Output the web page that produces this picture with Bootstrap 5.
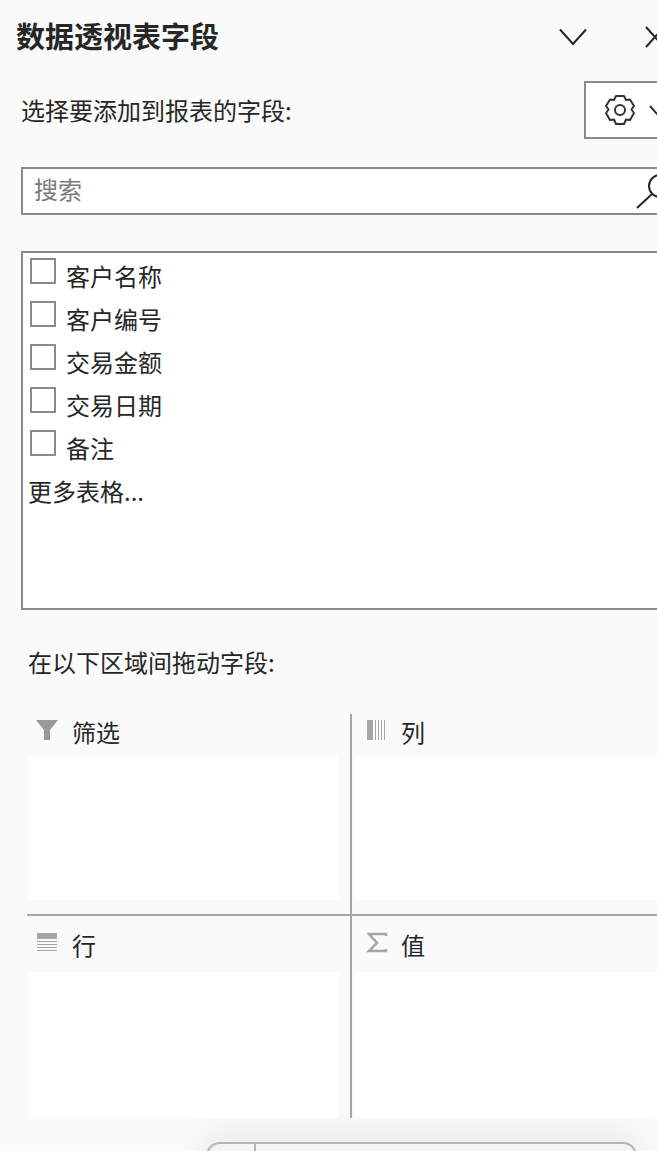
<!DOCTYPE html>
<html lang="zh-CN">
<head>
    <meta charset="UTF-8">
    <meta name="viewport" content="width=device-width, initial-scale=1.0">
    <title>数据透视表字段</title>
    <link href="https://cdn.jsdelivr.net/npm/bootstrap@5.3.0/dist/css/bootstrap.min.css" rel="stylesheet">
    <style>
        html, body { height: 1151px; overflow: hidden; }
        body {
            background: #fafafa;
            color: #262626;
            font-family: "Noto Sans CJK SC", "Liberation Sans", sans-serif;
            font-size: 24px;
            line-height: 34px;
        }
        .pane { width: 690px; position: relative; height: 1151px; }
        .pane-head { height: 74px; padding: 0 25px 0 16px; }
        .pane-title { font-size: 29px; font-weight: 700; line-height: 70px; margin: 0 0 4px; color: #262626; }
        .head-btns { gap: 58px; }
        .field-row { height: 58px; margin-top: 7px; padding-left: 21px; }
        .gear-btn { width: 106px; height: 58px; background: #fff; border: 2px solid #8a8a8a; padding-left: 17px; gap: 12px; }
        .search-wrap { height: 48px; margin: 28px 0 0 21px; background: #fff; border: 2px solid #8a8a8a; padding: 0 0 4px 11px; color: #7a7a7a; }
        .search-wrap svg { margin-right: 13px; margin-top: 4px; }
        .field-box { height: 359px; margin: 36px 0 0 21px; background: #fff; border: 2px solid #8a8a8a; padding: 5px 0 0 7px; }
        .field-item { height: 43px; gap: 10px; }
        .tick { width: 26px; height: 26px; border: 2px solid #8a8a8a; background: #fff; flex: none; }
        .field-label { line-height: 34px; margin-top: 1px; }
        .more-link { line-height: 34px; margin-top: 1px; margin-left: -2px; }
        .drag-hint { margin: 35px 0 0 28px; height: 34px; }
        .zones { margin: 35px 0 0 27px; width: 663px; display: grid; grid-template-columns: 323px 1fr; grid-template-rows: 202px 202px; position: relative; z-index: 1; }
        .zone { display: flex; flex-direction: column; }
        .zone-right { border-left: 2px solid #a6a6a6; }
        .zone-top { border-bottom: 2px solid #a6a6a6; }
        .zone-head { height: 43px; padding-bottom: 8px; gap: 14px; }
        .zone-left .zone-head { padding-left: 9px; }
        .zone-right .zone-head { padding-left: 14px; gap: 13px; }
        .zone-bottom .zone-head { height: 56px; padding: 2px 0 0 0; }
        .zone-bottom.zone-left .zone-head { padding-left: 9px; gap: 14px; }
        .zone-bottom.zone-right .zone-head { padding-left: 14px; }
        .drop-box { background: #fff; flex: 1; margin-right: 12px; margin-left: 1px; }
        .zone-top .drop-box { margin-bottom: 14px; }
        .zone-right .drop-box { margin-right: 0; margin-left: 3px; }
        .zone-icon { width: 22px; height: 24px; flex: none; margin-top: -4px; }
        .foot-bar { position: absolute; left: 206px; top: 1142px; width: 431px; height: 30px; border: 2px solid #b4b4b4; border-radius: 14px; background: #f4f4f4; box-shadow: 0 0 40px rgba(0,0,0,.12); }
        .foot-bar span { display: block; width: 48px; height: 30px; border-right: 2px solid #b4b4b4; }
    </style>
</head>
<body>
    <div class="pane">
        <div class="pane-head d-flex justify-content-between align-items-center">
            <h1 class="pane-title">数据透视表字段</h1>
            <div class="head-btns d-flex align-items-center">
                <svg width="28" height="18" viewBox="0 0 28 18" fill="none" stroke="#262626" stroke-width="2"><path d="M1 1.500 14 16 27 1.500"/></svg>
                <svg width="20" height="22" viewBox="0 0 20 22" fill="none" stroke="#262626" stroke-width="2"><path d="M1 1 19 21M19 1 1 21"/></svg>
            </div>
        </div>

        <div class="field-row d-flex justify-content-between align-items-center">
            <span>选择要添加到报表的字段:</span>
            <div class="gear-btn d-flex align-items-center">
                <svg width="34" height="32" viewBox="0 0 34 32" fill="none" stroke="#333" stroke-width="2" stroke-linejoin="round"><path d="M13 2h8l2 4 4-.500 4 6.500-2.500 3.500L31 19l-4 7-4-.500L21 30h-8l-2-4.500-4 .500-4-7 2.500-3.500L3 12l4-6.500 4 .500z"/><circle cx="17" cy="16" r="5"/></svg>
                <svg width="16" height="10" viewBox="0 0 16 10" fill="none" stroke="#333" stroke-width="2"><path d="M1 1l7 8 7-8"/></svg>
            </div>
        </div>

        <div class="search-wrap d-flex justify-content-between align-items-center">
            <span>搜索</span>
            <svg width="40" height="36" viewBox="0 0 40 36" fill="none" stroke="#262626" stroke-width="2"><circle cx="25" cy="13" r="11"/><path d="M17 21 2 35"/></svg>
        </div>

        <div class="field-box">
            <div class="field-item d-flex align-items-start"><div class="tick"></div><span class="field-label">客户名称</span></div>
            <div class="field-item d-flex align-items-start"><div class="tick"></div><span class="field-label">客户编号</span></div>
            <div class="field-item d-flex align-items-start"><div class="tick"></div><span class="field-label">交易金额</span></div>
            <div class="field-item d-flex align-items-start"><div class="tick"></div><span class="field-label">交易日期</span></div>
            <div class="field-item d-flex align-items-start"><div class="tick"></div><span class="field-label">备注</span></div>
            <div class="more-link">更多表格...</div>
        </div>

        <div class="drag-hint">在以下区域间拖动字段:</div>

        <div class="zones">
            <div class="zone zone-left zone-top">
                <div class="zone-head d-flex align-items-center">
                    <svg class="zone-icon" viewBox="0 0 22 24" fill="#999"><path d="M0 2h22L14 12v10H8V12z"/></svg>
                    <span>筛选</span>
                </div>
                <div class="drop-box"></div>
            </div>
            <div class="zone zone-right zone-top">
                <div class="zone-head d-flex align-items-center">
                    <svg class="zone-icon" viewBox="0 0 22 24" fill="#a6a6a6"><path d="M1 2h6v20H1zM9 2h1v20H9zM12 2h1v20h-1zM15 2h1v20h-1zM18 2h1v20h-1z"/></svg>
                    <span>列</span>
                </div>
                <div class="drop-box"></div>
            </div>
            <div class="zone zone-left zone-bottom">
                <div class="zone-head d-flex align-items-center">
                    <svg class="zone-icon" viewBox="0 0 22 24" fill="#a6a6a6"><path d="M1 2h20v6H1zM1 10h20v1H1zM1 13h20v1H1zM1 16h20v1H1zM1 19h20v1H1z"/></svg>
                    <span>行</span>
                </div>
                <div class="drop-box"></div>
            </div>
            <div class="zone zone-right zone-bottom">
                <div class="zone-head d-flex align-items-center">
                    <svg class="zone-icon" viewBox="0 0 22 24" fill="none" stroke="#a6a6a6" stroke-width="2.500"><path d="M20 5V3H3l8 9-8 8h17v-2"/></svg>
                    <span>值</span>
                </div>
                <div class="drop-box"></div>
            </div>
        </div>

        <div class="foot-bar"><span></span></div>
    </div>

    <script src="https://cdn.jsdelivr.net/npm/bootstrap@5.3.0/dist/js/bootstrap.bundle.min.js"></script>
</body>
</html>
